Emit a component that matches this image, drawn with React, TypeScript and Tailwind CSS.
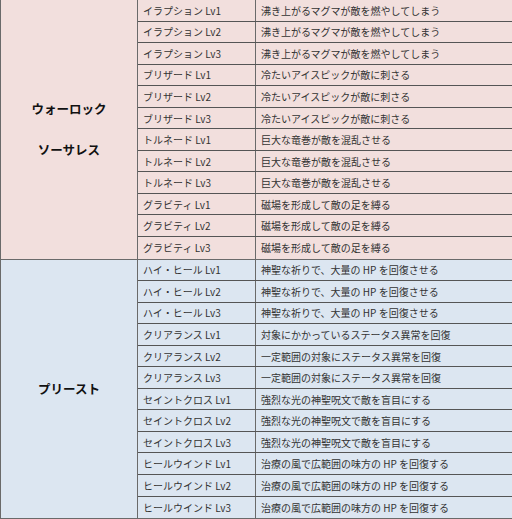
import React from "react";

type Skill = { name: string; desc: string };

const warlock: Skill[] = [
  { name: "イラプション Lv1", desc: "沸き上がるマグマが敵を燃やしてしまう" },
  { name: "イラプション Lv2", desc: "沸き上がるマグマが敵を燃やしてしまう" },
  { name: "イラプション Lv3", desc: "沸き上がるマグマが敵を燃やしてしまう" },
  { name: "ブリザード Lv1", desc: "冷たいアイスピックが敵に刺さる" },
  { name: "ブリザード Lv2", desc: "冷たいアイスピックが敵に刺さる" },
  { name: "ブリザード Lv3", desc: "冷たいアイスピックが敵に刺さる" },
  { name: "トルネード Lv1", desc: "巨大な竜巻が敵を混乱させる" },
  { name: "トルネード Lv2", desc: "巨大な竜巻が敵を混乱させる" },
  { name: "トルネード Lv3", desc: "巨大な竜巻が敵を混乱させる" },
  { name: "グラビティ Lv1", desc: "磁場を形成して敵の足を縛る" },
  { name: "グラビティ Lv2", desc: "磁場を形成して敵の足を縛る" },
  { name: "グラビティ Lv3", desc: "磁場を形成して敵の足を縛る" },
];

const priest: Skill[] = [
  { name: "ハイ・ヒール Lv1", desc: "神聖な祈りで、大量の HP を回復させる" },
  { name: "ハイ・ヒール Lv2", desc: "神聖な祈りで、大量の HP を回復させる" },
  { name: "ハイ・ヒール Lv3", desc: "神聖な祈りで、大量の HP を回復させる" },
  { name: "クリアランス Lv1", desc: "対象にかかっているステータス異常を回復" },
  { name: "クリアランス Lv2", desc: "一定範囲の対象にステータス異常を回復" },
  { name: "クリアランス Lv3", desc: "一定範囲の対象にステータス異常を回復" },
  { name: "セイントクロス Lv1", desc: "強烈な光の神聖呪文で敵を盲目にする" },
  { name: "セイントクロス Lv2", desc: "強烈な光の神聖呪文で敵を盲目にする" },
  { name: "セイントクロス Lv3", desc: "強烈な光の神聖呪文で敵を盲目にする" },
  { name: "ヒールウインド Lv1", desc: "治療の風で広範囲の味方の HP を回復する" },
  { name: "ヒールウインド Lv2", desc: "治療の風で広範囲の味方の HP を回復する" },
  { name: "ヒールウインド Lv3", desc: "治療の風で広範囲の味方の HP を回復する" },
];

function Section({ label, skills, bg }: { label: React.ReactNode; skills: Skill[]; bg: string }) {
  return (
    <div className={`flex border-b border-[#6a6a6a] ${bg}`}>
      <div className="w-[137px] shrink-0 border-r border-[#6a6a6a] flex items-center justify-center text-[12.5px] font-bold text-[#111] leading-[41px] text-center">
        {label}
      </div>
      <div className="flex-1 flex flex-col">
        {skills.map((s, i) => (
          <div
            key={i}
            className={`flex h-[21.55px] ${i < skills.length - 1 ? "border-b border-[#555]" : ""}`}
          >
            <div className="w-[118px] shrink-0 border-r border-[#6a6a6a] pl-[5px] flex items-center text-[10px] text-[#333]">
              {s.name}
            </div>
            <div className="flex-1 pl-[5px] flex items-center text-[10px] text-[#333] whitespace-nowrap">
              {s.desc}
            </div>
          </div>
        ))}
      </div>
    </div>
  );
}

export default function App() {
  return (
    <div
      className="w-[512px] h-[519px] overflow-hidden bg-[#dce6f1]"
      style={{ fontFamily: '"Noto Sans CJK JP", "Noto Sans", sans-serif' }}
    >
      <div className="border-l border-[#6a6a6a]">
        <Section
          bg="bg-[#f2dfdd]"
          skills={warlock}
          label={
            <div>
              ウォーロック
              <br />
              ソーサレス
            </div>
          }
        />
        <Section bg="bg-[#dce6f1]" skills={priest} label="プリースト" />
      </div>
    </div>
  );
}
